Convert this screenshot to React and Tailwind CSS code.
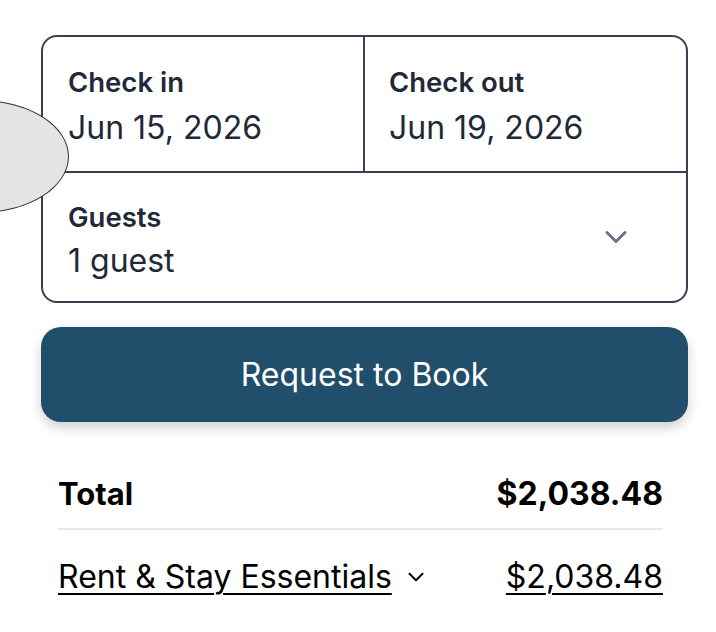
import React from "react";

function ChevronDown({ className, strokeWidth = 2 }) {
  return (
    <svg viewBox="0 0 24 24" fill="none" stroke="currentColor" strokeWidth={strokeWidth} strokeLinecap="round" strokeLinejoin="round" className={className}>
      <path d="M6 9l6 6 6-6" />
    </svg>
  );
}

export default function App() {
  return (
    <div className="relative w-[716px] h-[632px] bg-white overflow-hidden font-['Inter',sans-serif]">
      {/* drag handle blob on the left edge */}
      <div className="absolute left-[-110px] top-[100px] w-[179px] h-[113px] rounded-[50%] bg-[#e4e4e4] border border-[#333] z-10" />

      <div className="pt-[35px] pl-[41px] pr-[28px]">
        {/* date / guest picker */}
        <div className="border-2 border-[#374151] rounded-[16px] text-[#1f2937]">
          <div className="flex border-b-2 border-[#374151] h-[136px]">
            <div className="w-[322px] border-r-2 border-[#374151] pl-[25px] pt-[30px]">
              <div className="text-[27.5px] font-semibold leading-[30px]">Check in</div>
              <div className="text-[32px] leading-[40px] mt-[11px]">Jun 15, 2026</div>
            </div>
            <div className="flex-1 pl-[24px] pt-[30px]">
              <div className="text-[27.5px] font-semibold leading-[30px]">Check out</div>
              <div className="text-[32px] leading-[40px] mt-[11px]">Jun 19, 2026</div>
            </div>
          </div>
          <div className="flex h-[128px] pl-[25px] pr-[52px]">
            <div className="flex-1 pt-[29px]">
              <div className="text-[27.5px] font-semibold leading-[30px]">Guests</div>
              <div className="text-[32px] leading-[40px] mt-[9px]">1 guest</div>
            </div>
            <ChevronDown className="self-center w-[36px] h-[36px] text-[#6b7280]" />
          </div>
        </div>

        {/* primary action */}
        <button className="mt-[24px] w-full h-[95px] rounded-[20px] bg-[#214f6b] text-white text-[32px] shadow-[0_6px_12px_rgba(0,0,0,0.18)]">
          Request to Book
        </button>

        {/* price summary */}
        <div className="ml-[17px] mr-[25px] mt-[54px] text-black">
          <div className="flex justify-between items-center pb-[16px] border-b-2 border-[#e5e7eb]">
            <span className="text-[31px] font-bold leading-[36px]">Total</span>
            <span className="text-[32px] font-bold leading-[36px]">$2,038.48</span>
          </div>
          <div className="flex justify-between items-center mt-[29px]">
            <span className="flex items-center gap-[11px] text-[32px] leading-[36px]">
              <span className="underline underline-offset-[5px] decoration-2">Rent &amp; Stay Essentials</span>
              <ChevronDown className="w-[26px] h-[26px]" strokeWidth={1.8} />
            </span>
            <span className="text-[32px] leading-[36px] underline underline-offset-[5px] decoration-2">$2,038.48</span>
          </div>
        </div>
      </div>
    </div>
  );
}
